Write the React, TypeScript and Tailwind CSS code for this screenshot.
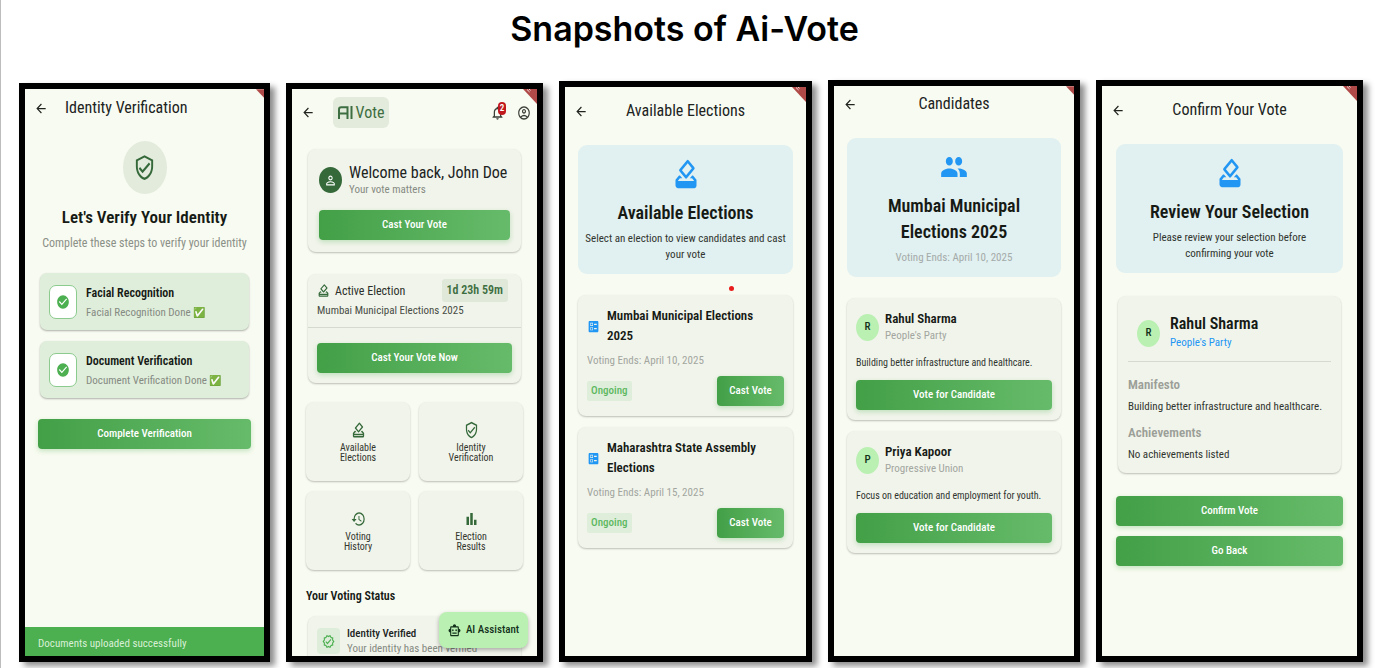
import type { ReactNode } from "react";
import type { IconType } from "react-icons";
import {
  MdArrowBack,
  MdBallot,
  MdBarChart,
  MdCheckCircle,
  MdHistory,
  MdHowToVote,
  MdNotificationsNone,
  MdOutlineAccountCircle,
  MdOutlineHowToVote,
  MdOutlineSmartToy,
  MdOutlineVerified,
  MdOutlineVerifiedUser,
  MdPeople,
  MdPersonOutline,
} from "react-icons/md";

function Glyph({ icon: Icon, className }: { icon: IconType; className: string }) {
  return <Icon aria-hidden="true" preserveAspectRatio="none" className={`shrink-0 ${className}`} />;
}

function Phone({ className, wideRibbon = true, children }: { className: string; wideRibbon?: boolean; children: ReactNode }) {
  return (
    <section
      className={`relative flex min-h-0 min-w-0 flex-col overflow-hidden border-6 border-black bg-[#f8fbf1] shadow-[5px_4px_6px_rgba(0,0,0,0.45)] ${className}`}
    >
      {children}
      <svg
        aria-hidden="true"
        viewBox="0 0 14 15"
        className={`absolute top-0 right-0 ${wideRibbon ? "h-[15px] w-[14px]" : "h-[9px] w-[8px]"}`}
      >
        <path d="M0 0H14V15Z" fill="#b04a48" />
        {wideRibbon && <path d="M4 0.5 6.6 3M6 0 7.6 1.4" stroke="#f3dcdc" strokeWidth="1" />}
      </svg>
    </section>
  );
}

function BackButton() {
  return (
    <button type="button" aria-label="Back" className="flex shrink-0 text-[#20231e]">
      <Glyph icon={MdArrowBack} className="h-[15px] w-[14px]" />
    </button>
  );
}

function CenteredBar({ title, className }: { title: string; className: string }) {
  return (
    <header className={`grid grid-cols-[14px_1fr_14px] items-center px-[9px] ${className}`}>
      <BackButton />
      <h2 className="text-center text-[16px] leading-[20px] text-[#20231e]">{title}</h2>
    </header>
  );
}

function GreenButton({ children, className = "w-full" }: { children: ReactNode; className?: string }) {
  return (
    <button
      type="button"
      className={`h-[30px] shrink-0 rounded-[4px] bg-linear-to-r from-[#43a047] to-[#66bb6a] text-[11px] font-medium text-white shadow-[0_2px_5px_rgba(76,175,80,0.3)] ${className}`}
    >
      {children}
    </button>
  );
}

const card = "rounded-[8px] bg-[#f1f4eb] shadow-[0_1px_2px_rgba(0,0,0,0.24)]";

function Step({ title, status }: { title: string; status: string }) {
  return (
    <li className="flex h-[57px] items-center gap-[9px] rounded-[7px] bg-[#dfeedb] px-[9px] shadow-[0_1px_2px_rgba(0,0,0,0.3)]">
      <span className="flex h-[34px] w-[28px] items-center justify-center rounded-[7px] border border-[#8ccb8e] bg-white">
        <Glyph icon={MdCheckCircle} className="h-[16px] w-[14px] text-[#4caf50]" />
      </span>
      <div className="pt-[2px]">
        <h4 className="text-[12px] leading-[19px] font-semibold text-[#161a15]">{title}</h4>
        <p className="flex items-center gap-[2px] text-[11px] leading-[19px] text-[#858a82]">
          {status}
          <span className="text-[10px]">✅</span>
        </p>
      </div>
    </li>
  );
}

function VerificationScreen() {
  return (
    <Phone className="mt-[3px]" wideRibbon={false}>
      <header className="flex items-center gap-[17px] px-[9px] pt-[9px]">
        <BackButton />
        <h2 className="text-[16px] leading-[20px] text-[#20231e]">Identity Verification</h2>
      </header>
      <div className="flex flex-col items-center pt-[23px] text-center">
        <span className="flex h-[53px] w-[44px] items-center justify-center rounded-[50%] bg-[#e3ebdc]">
          <Glyph icon={MdOutlineVerifiedUser} className="h-[27px] w-[23px] text-[#35693a]" />
        </span>
        <h3 className="pt-[11px] text-[17px] leading-[24px] font-semibold text-[#161a15]">Let's Verify Your Identity</h3>
        <p className="pt-[6px] text-[12px] leading-[17px] text-[#8b9088]">Complete these steps to verify your identity</p>
      </div>
      <ul className="flex flex-col gap-[11px] px-[15px] pt-[21px]">
        <Step title="Facial Recognition" status="Facial Recognition Done" />
        <Step title="Document Verification" status="Document Verification Done" />
      </ul>
      <div className="px-[13px] pt-[21px]">
        <GreenButton>Complete Verification</GreenButton>
      </div>
      <p role="status" className="mt-auto h-[29px] bg-[#4caf50] px-[13px] pt-[8px] text-[11px] leading-[17px] text-[#d9efd6]">
        Documents uploaded successfully
      </p>
    </Phone>
  );
}

const tiles: { icon: IconType; lines: [string, string] }[] = [
  { icon: MdOutlineHowToVote, lines: ["Available", "Elections"] },
  { icon: MdOutlineVerifiedUser, lines: ["Identity", "Verification"] },
  { icon: MdHistory, lines: ["Voting", "History"] },
  { icon: MdBarChart, lines: ["Election", "Results"] },
];

function DashboardScreen() {
  return (
    <Phone className="mt-[3px]">
      <header className="flex shrink-0 items-center pt-[8px] pr-[6px] pl-[9px]">
        <BackButton />
        <div className="ml-[18px] flex h-[31px] w-[56px] items-center justify-center gap-[3px] rounded-[6px] bg-[#e3ebdc] text-[#3d6e41]">
          <svg role="img" aria-label="AI" viewBox="0 0 15 13" className="h-[13px] w-[15px]" fill="none" stroke="currentColor" strokeWidth="2">
            <path d="M1 13V3.5Q1 1.2 3.2 1.2H9.5V13M1 7.5H9.5M13.5 0V13" />
          </svg>
          <span className="text-[16px] leading-[20px]">Vote</span>
        </div>
        <div className="ml-auto flex items-center gap-[12px] text-[#3a3f38]">
          <button type="button" aria-label="Notifications, 2 unread" className="relative flex">
            <Glyph icon={MdNotificationsNone} className="h-[16px] w-[15px]" />
            <span className="absolute -top-[3px] left-[8px] flex h-[13px] w-[8px] items-center justify-center rounded-[4px] bg-[#c0181d] text-[9px] leading-none font-semibold text-white">
              2
            </span>
          </button>
          <button type="button" aria-label="Account" className="flex">
            <Glyph icon={MdOutlineAccountCircle} className="h-[16px] w-[14px]" />
          </button>
        </div>
      </header>
      <div className="flex min-h-0 flex-1 flex-col overflow-hidden px-[14px] pt-[21px]">
        <article className={`mx-[2px] shrink-0 px-[11px] pt-[14px] pb-[12px] ${card}`}>
          <div className="flex items-center gap-[7px]">
            <span className="flex h-[26px] w-[23px] items-center justify-center rounded-[50%] bg-[#35693a]">
              <Glyph icon={MdPersonOutline} className="h-[15px] w-[13px] text-white" />
            </span>
            <div>
              <h3 className="text-[16px] leading-[20px] whitespace-nowrap text-[#20231e]">Welcome back, John Doe</h3>
              <p className="text-[11px] leading-[14px] text-[#858a82]">Your vote matters</p>
            </div>
          </div>
          <div className="pt-[13px]">
            <GreenButton>Cast Your Vote</GreenButton>
          </div>
        </article>
        <article className={`mx-[2px] mt-[22px] shrink-0 ${card}`}>
          <div className="flex items-center gap-[5px] pt-[5px] pr-[13px] pl-[9px]">
            <Glyph icon={MdOutlineHowToVote} className="h-[15px] w-[13px] text-[#35693a]" />
            <h3 className="text-[12px] leading-[16px] text-[#2c302a]">Active Election</h3>
            <span className="ml-auto rounded-[3px] bg-[#e0e8da] px-[5px] text-[12px] leading-[23px] font-semibold text-[#3d6e41]">
              1d 23h 59m
            </span>
          </div>
          <p className="border-b border-[#d5dacf] px-[9px] pb-[8px] text-[11px] leading-[17px] text-[#484d45]">
            Mumbai Municipal Elections 2025
          </p>
          <div className="px-[9px] pt-[15px] pb-[10px]">
            <GreenButton>Cast Your Vote Now</GreenButton>
          </div>
        </article>
        <nav className="mt-[19px] grid shrink-0 grid-cols-2 gap-x-[9px] gap-y-[10px]">
          {tiles.map(({ icon, lines }) => (
            <a
              key={lines.join(" ")}
              href="#"
              className={`flex h-[79px] flex-col items-center justify-center text-center text-[10px] leading-[10px] text-[#33372f] ${card}`}
            >
              <Glyph icon={icon} className="mb-[4px] h-[18px] w-[15px] text-[#35693a]" />
              <span>{lines[0]}</span>
              <span>{lines[1]}</span>
            </a>
          ))}
        </nav>
        <h3 className="shrink-0 pt-[18px] text-[12px] leading-[16px] font-semibold text-[#161a15]">Your Voting Status</h3>
        <article className={`mx-[2px] mt-[12px] flex shrink-0 items-start gap-[7px] px-[9px] pt-[10px] pb-[12px] ${card}`}>
          <span className="mt-[2px] flex h-[26px] w-[23px] items-center justify-center rounded-[4px] bg-[#deedda]">
            <Glyph icon={MdOutlineVerified} className="h-[15px] w-[13px] text-[#4caf50]" />
          </span>
          <div className="whitespace-nowrap">
            <h4 className="text-[11px] leading-[15px] font-medium text-[#20231e]">Identity Verified</h4>
            <p className="text-[11px] leading-[15px] text-[#858a82]">Your identity has been verified</p>
          </div>
        </article>
      </div>
      <button
        type="button"
        className="absolute right-[9px] bottom-[8px] flex h-[36px] w-[89px] items-center justify-center gap-[5px] rounded-[8px] bg-[#bbf0b3] text-[11px] font-medium text-[#12301a] shadow-[0_2px_4px_rgba(0,0,0,0.3)]"
      >
        <Glyph icon={MdOutlineSmartToy} className="h-[15px] w-[13px]" />
        AI Assistant
      </button>
    </Phone>
  );
}

function Hero({ icon, title, note, noteClass }: { icon: IconType; title: string; note: string; noteClass: string }) {
  return (
    <section className="flex flex-col items-center rounded-[9px] bg-[#e1f0f0] px-[4px] pt-[12px] pb-[11px] text-center">
      <Glyph icon={icon} className="h-[34px] w-[28px] text-[#2196f3]" />
      <h3 className="max-w-[180px] pt-[9px] text-[18px] leading-[26px] font-semibold text-[#161a15]">{title}</h3>
      <p className={`pt-[5px] text-[11px] leading-[16px] ${noteClass}`}>{note}</p>
    </section>
  );
}

function ElectionCard({ title, ends }: { title: string; ends: string }) {
  return (
    <article className={`px-[9px] pt-[11px] pb-[10px] ${card}`}>
      <div className="flex items-center gap-[7px] pr-[20px]">
        <Glyph icon={MdBallot} className="h-[15px] w-[13px] text-[#2196f3]" />
        <h3 className="text-[13px] leading-[20px] font-semibold text-[#161a15]">{title}</h3>
      </div>
      <p className="pt-[6px] text-[11px] leading-[17px] text-[#a2a69f]">Voting Ends: {ends}</p>
      <div className="flex items-center justify-between pt-[7px]">
        <span className="rounded-[2px] bg-[#dfeedb] px-[4px] text-[11px] leading-[20px] font-medium text-[#5cb860]">Ongoing</span>
        <GreenButton className="w-[67px]">Cast Vote</GreenButton>
      </div>
    </article>
  );
}

function ElectionsScreen() {
  return (
    <Phone className="mt-[1px]">
      <CenteredBar title="Available Elections" className="pt-[14px]" />
      <div className="flex flex-col px-[13px] pt-[24px]">
        <Hero
          icon={MdHowToVote}
          title="Available Elections"
          note="Select an election to view candidates and cast your vote"
          noteClass="text-[#30352f]"
        />
        <span aria-hidden="true" className="mt-[12px] mb-[4px] ml-[151px] size-[5px] rounded-full bg-[#e81c1c]" />
        <div className="flex flex-col gap-[11px]">
          <ElectionCard title="Mumbai Municipal Elections 2025" ends="April 10, 2025" />
          <ElectionCard title="Maharashtra State Assembly Elections" ends="April 15, 2025" />
        </div>
      </div>
    </Phone>
  );
}

function Avatar({ initial }: { initial: string }) {
  return (
    <span className="flex h-[27px] w-[23px] shrink-0 items-center justify-center rounded-[50%] bg-[#bbf0b3] text-[11px] font-medium text-[#12301a]">
      {initial}
    </span>
  );
}

function CandidateCard({ name, party, pledge }: { name: string; party: string; pledge: string }) {
  return (
    <article className={`px-[9px] pt-[12px] pb-[10px] ${card}`}>
      <div className="flex items-center gap-[6px]">
        <Avatar initial={name[0]} />
        <div>
          <h3 className="text-[13px] leading-[18px] font-semibold text-[#161a15]">{name}</h3>
          <p className="text-[11px] leading-[16px] text-[#a2a69f]">{party}</p>
        </div>
      </div>
      <p className="pt-[10px] pb-[9px] text-[10px] leading-[17px] text-[#30352f]">{pledge}</p>
      <GreenButton>Vote for Candidate</GreenButton>
    </article>
  );
}

function CandidatesScreen() {
  return (
    <Phone className="" wideRibbon={false}>
      <CenteredBar title="Candidates" className="pt-[8px]" />
      <div className="flex flex-col px-[13px] pt-[24px]">
        <Hero
          icon={MdPeople}
          title="Mumbai Municipal Elections 2025"
          note="Voting Ends: April 10, 2025"
          noteClass="text-[#a4abaa]"
        />
        <div className="flex flex-col gap-[11px] pt-[21px]">
          <CandidateCard name="Rahul Sharma" party="People's Party" pledge="Building better infrastructure and healthcare." />
          <CandidateCard name="Priya Kapoor" party="Progressive Union" pledge="Focus on education and employment for youth." />
        </div>
      </div>
    </Phone>
  );
}

function ConfirmScreen() {
  return (
    <Phone className="">
      <CenteredBar title="Confirm Your Vote" className="pt-[14px]" />
      <div className="flex flex-col px-[14px] pt-[24px]">
        <Hero
          icon={MdHowToVote}
          title="Review Your Selection"
          note="Please review your selection before confirming your vote"
          noteClass="max-w-[190px] text-[#30352f]"
        />
        <article className={`mx-[2px] mt-[23px] px-[10px] pt-[18px] pb-[10px] ${card}`}>
          <div className="flex items-center gap-[10px] border-b border-[#d5dacf] pb-[9px] pl-[9px]">
            <Avatar initial="R" />
            <div>
              <h3 className="text-[16px] leading-[20px] font-semibold text-[#161a15]">Rahul Sharma</h3>
              <p className="text-[11px] leading-[18px] text-[#2196f3]">People's Party</p>
            </div>
          </div>
          <h4 className="pt-[14px] text-[13px] leading-[18px] font-semibold text-[#9b9f98]">Manifesto</h4>
          <p className="pt-[4px] text-[11px] leading-[17px] text-[#30352f]">Building better infrastructure and healthcare.</p>
          <h4 className="pt-[9px] text-[13px] leading-[18px] font-semibold text-[#9b9f98]">Achievements</h4>
          <p className="pt-[4px] text-[11px] leading-[17px] text-[#30352f]">No achievements listed</p>
        </article>
        <div className="flex flex-col gap-[10px] pt-[23px]">
          <GreenButton>Confirm Vote</GreenButton>
          <GreenButton>Go Back</GreenButton>
        </div>
      </div>
    </Phone>
  );
}

export default function App() {
  return (
    <main className="flex h-screen flex-col overflow-hidden border-l border-[#bdbdbd] bg-white font-['Roboto_Condensed','Roboto','Noto_Sans',sans-serif]">
      <h1 className="pt-[9px] pr-[8px] pb-[31px] text-center font-['Inter','Lato',sans-serif] text-[34px] leading-[40px] font-semibold text-black">
        Snapshots of Ai-Vote
      </h1>
      <div className="grid min-h-0 flex-1 grid-cols-[251fr_257fr_253fr_252fr_267fr] grid-rows-[minmax(0,1fr)] gap-[16px] pr-[13px] pb-[6px] pl-[18px]">
        <VerificationScreen />
        <DashboardScreen />
        <ElectionsScreen />
        <CandidatesScreen />
        <ConfirmScreen />
      </div>
    </main>
  );
}
